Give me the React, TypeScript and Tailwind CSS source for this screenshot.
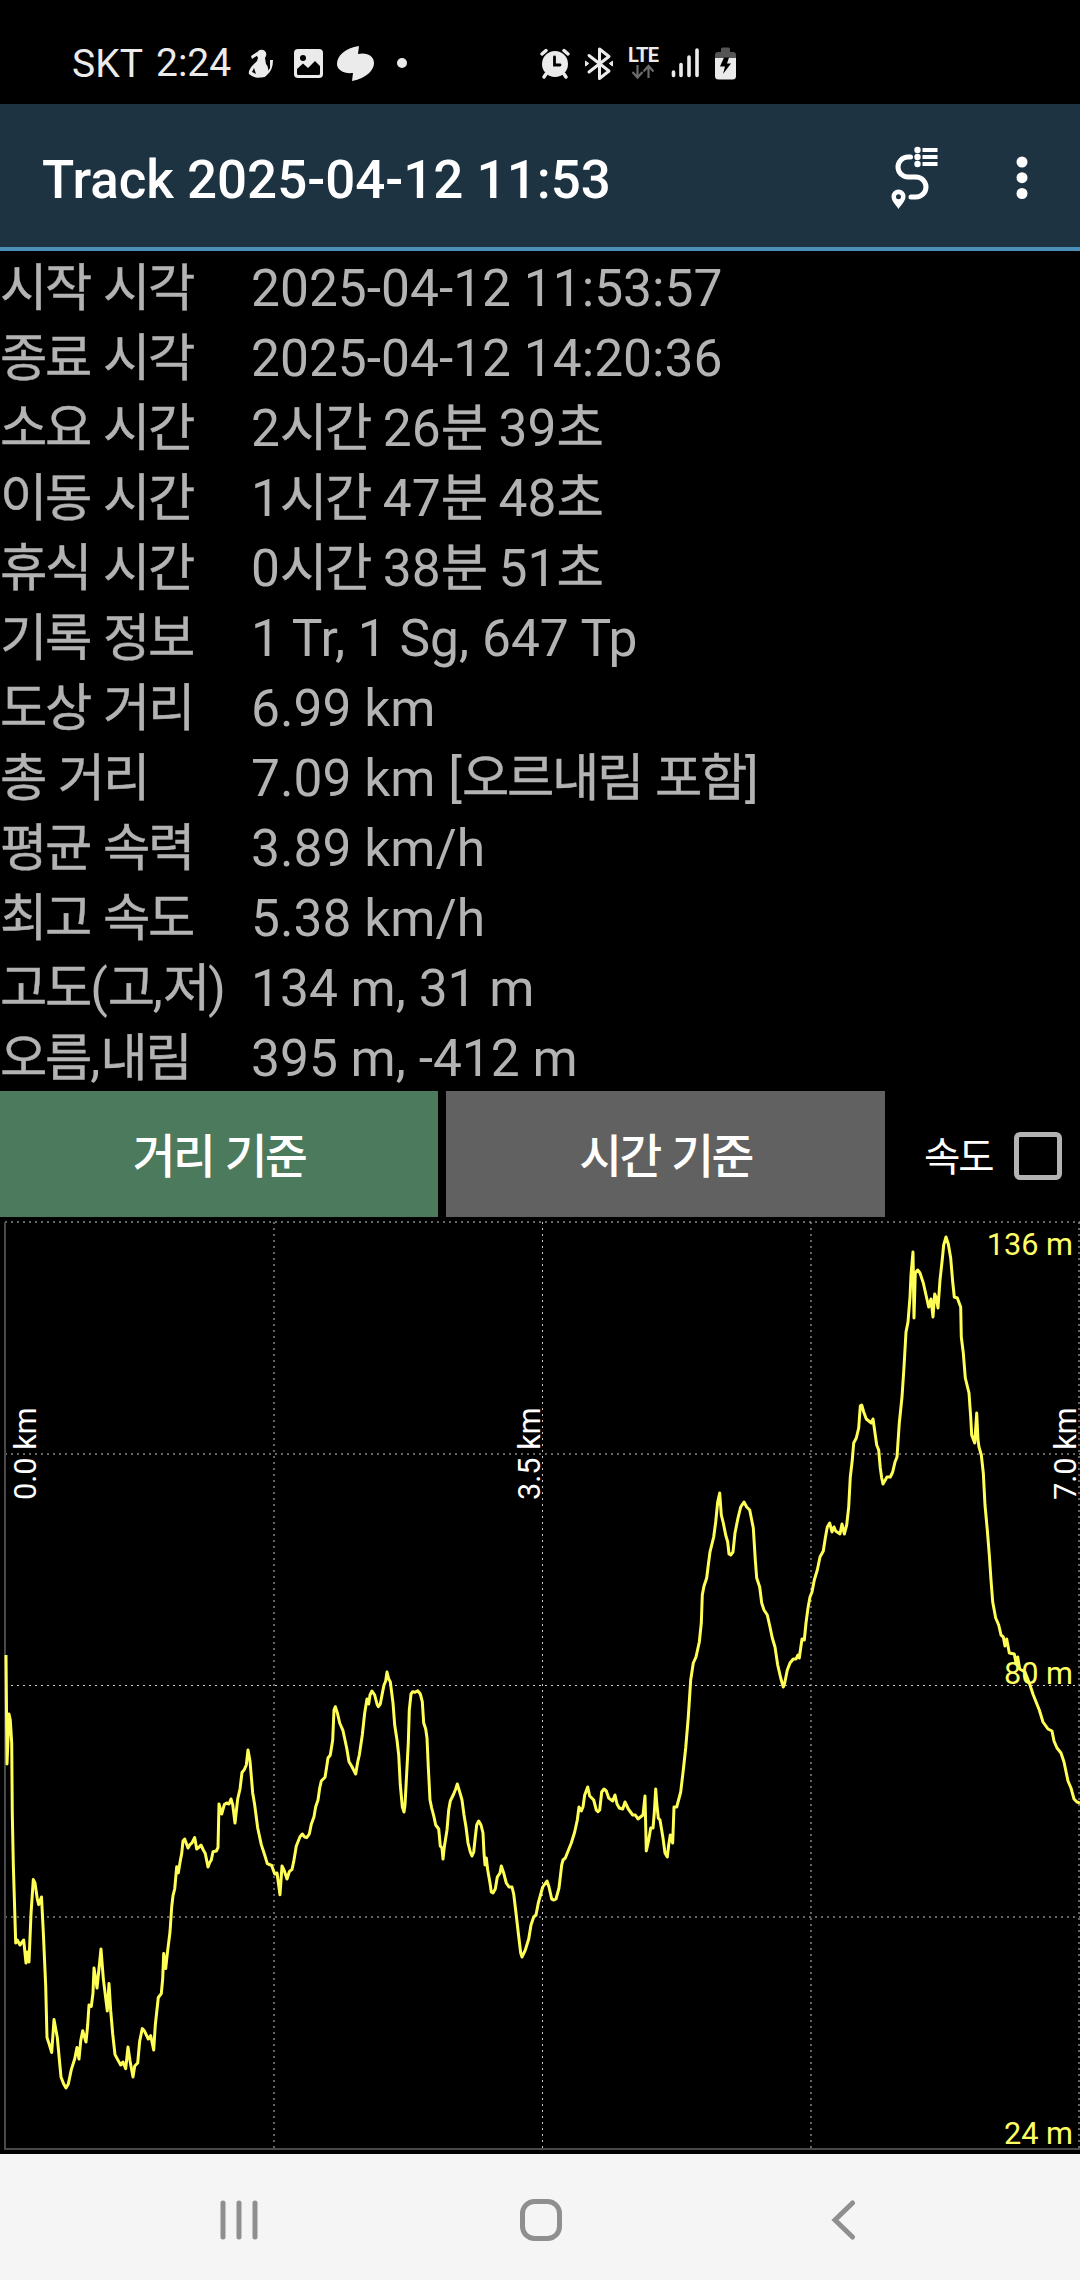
import React from 'react'

type Point = [number, number]

const STATS: { label: string; value: string }[] = [
  { label: '시작 시각', value: '2025-04-12 11:53:57' },
  { label: '종료 시각', value: '2025-04-12 14:20:36' },
  { label: '소요 시간', value: '2시간 26분 39초' },
  { label: '이동 시간', value: '1시간 47분 48초' },
  { label: '휴식 시간', value: '0시간 38분 51초' },
  { label: '기록 정보', value: '1 Tr, 1 Sg, 647 Tp' },
  { label: '도상 거리', value: '6.99 km' },
  { label: '총 거리', value: '7.09 km [오르내림 포함]' },
  { label: '평균 속력', value: '3.89 km/h' },
  { label: '최고 속도', value: '5.38 km/h' },
  { label: '고도(고,저)', value: '134 m, 31 m' },
  { label: '오름,내림', value: '395 m, -412 m' },
]

// Elevation profile, in chart units
const PROFILE: Point[] = [
  [6, 1655], [7, 1764], [9, 1714], [10.3, 1720], [11.7, 1743], [12.3, 1814], [13.3, 1864], [15.7, 1943],
  [17.3, 1940], [20, 1945], [23.7, 1940], [26, 1963], [27.3, 1952], [29, 1962], [31, 1914], [33.3, 1879.6],
  [35, 1883], [37.3, 1899], [38.7, 1904.6], [41.5, 1897], [43.3, 1932], [45.7, 1986], [47, 2037.5], [49.3, 2044.6],
  [51.7, 2052.5], [54, 2019.6], [57.3, 2037.5], [59.3, 2059], [61, 2077], [63.7, 2084], [66, 2088], [68.3, 2084],
  [71.3, 2069.6], [74.7, 2059], [77, 2047.5], [79, 2059], [80.7, 2041], [82.7, 2030.7], [86, 2042], [87.7, 2025],
  [89, 2005], [91.3, 2006.4], [93, 1993], [94, 1968], [97, 1988], [101, 1949], [103.3, 1978.6], [107.3, 2011],
  [109, 1983.6], [110.7, 2010.7], [112.7, 2034], [115, 2054.6], [117.7, 2059.6], [120.7, 2065], [123, 2062], [125.7, 2068.6],
  [128, 2047], [130, 2060.7], [133, 2077], [134.7, 2066], [137.7, 2063], [139.7, 2041], [142.3, 2028.6], [144.3, 2030.7],
  [148.3, 2039], [150.7, 2035.7], [153.7, 2050], [155.3, 2025], [158.3, 1997.5], [161.3, 1993.6], [162.7, 1978.6], [163.7, 1953.6],
  [165.7, 1968.6], [167.3, 1953.6], [170, 1932], [171.7, 1907], [173, 1895.7], [174.7, 1889], [176.7, 1866.8], [178.3, 1872.9],
  [180.3, 1860.7], [181.7, 1853.6], [183, 1841], [184.7, 1839], [188, 1848], [190, 1844.6], [192, 1842.9], [194.7, 1837.5],
  [196.7, 1849], [198.7, 1847.5], [201, 1845], [203.3, 1850], [205.3, 1853.6], [208, 1867], [209.7, 1862.5], [211.3, 1860],
  [213, 1851.8], [216.3, 1851], [218, 1847.5], [219, 1804], [221.7, 1814], [224.3, 1804.6], [226.7, 1803], [229, 1804],
  [231, 1799], [232.7, 1804.6], [235, 1823], [237.7, 1799], [240, 1789], [242, 1772.5], [244.3, 1769.6], [246.3, 1765],
  [248, 1750], [250, 1761], [252.7, 1793], [254.7, 1805], [257.7, 1828], [261.3, 1844.6], [265, 1856], [267.3, 1863.6],
  [271.7, 1865.5], [274.7, 1874], [277, 1873], [280, 1894.7], [282, 1866], [284.3, 1870.7], [287, 1879], [289.3, 1871.7],
  [292, 1869.3], [293.7, 1861.7], [296.3, 1846], [300, 1836.7], [302.3, 1834], [304.7, 1837], [306.7, 1837.7], [309.3, 1834],
  [311.3, 1824.3], [314, 1816.7], [315.7, 1806.7], [318, 1800], [319.7, 1788], [321.3, 1781], [325, 1777.3], [326.7, 1766.7],
  [328, 1758], [330.3, 1755], [332.7, 1740], [334, 1710], [335.3, 1706.7], [337.3, 1712.7], [339.7, 1723], [343, 1730.7],
  [346.7, 1748], [349, 1761.7], [352, 1766.7], [355.7, 1774], [357.7, 1762], [359.3, 1755], [362.3, 1735], [364.7, 1713],
  [367, 1699], [368.7, 1704], [370, 1695], [372, 1691], [374.7, 1695], [377, 1704], [378.3, 1706.7], [380.3, 1704],
  [382, 1695], [384, 1685], [385.7, 1681], [387, 1672], [388.7, 1679], [390.3, 1681.7], [393, 1703], [394.7, 1725],
  [397, 1740], [398.7, 1755], [400.3, 1785], [402.3, 1806.7], [404, 1812], [405, 1805], [406.7, 1773], [408.3, 1743],
  [409.3, 1710], [411, 1694], [412.7, 1691.7], [415, 1692.3], [417.7, 1690.7], [420.3, 1694], [422.3, 1701.7], [423.7, 1723],
  [425.7, 1729], [427, 1738], [428.3, 1767], [430, 1800], [431.7, 1808], [434, 1817], [435.7, 1825], [438.7, 1829],
  [440.3, 1846], [442, 1848], [443, 1859], [444.3, 1847], [447, 1830], [448.7, 1810], [450.3, 1801], [453.7, 1794],
  [455.7, 1789], [457.3, 1784], [460, 1793], [462, 1800], [464, 1815], [466, 1827], [468, 1843], [470.3, 1852],
  [472, 1856], [473.7, 1852], [475.3, 1837], [476.7, 1825], [478.7, 1821], [481, 1825], [483, 1833], [484, 1853],
  [485, 1865], [486.3, 1858], [487.7, 1870], [490, 1883], [491.3, 1892], [493, 1893], [495.3, 1889], [497.3, 1877],
  [500, 1873], [501.3, 1866], [503.7, 1873], [506.3, 1883], [509, 1887], [512, 1887], [513.7, 1894], [516, 1913],
  [518.3, 1933], [520.7, 1953], [522, 1957], [525.3, 1950], [528.7, 1939], [531, 1925], [533.7, 1917], [536, 1915],
  [538.3, 1903], [542.7, 1887], [547, 1881], [549, 1887], [551.7, 1899], [554, 1900], [556, 1899], [559, 1888],
  [561.7, 1865], [563, 1860], [565.3, 1858], [567.7, 1852], [571.3, 1843], [574.7, 1832], [577.3, 1820], [579, 1807],
  [581.3, 1811], [583, 1807], [584.7, 1795], [587.7, 1787], [589.7, 1796], [593.7, 1800], [596.3, 1810], [598, 1811.7],
  [599.7, 1810], [601.7, 1792], [604, 1789], [606.3, 1791], [608.7, 1798], [612.7, 1801], [615, 1795], [617, 1804],
  [619.3, 1808], [622.7, 1809], [625, 1802], [628.3, 1809], [632.7, 1815], [635.3, 1815], [638, 1819], [641.7, 1816],
  [643, 1815], [645, 1796], [646.3, 1851], [648.7, 1840], [650.7, 1828], [653, 1828], [654.3, 1813], [655.7, 1789],
  [656.7, 1803], [658.3, 1818], [660, 1820], [663, 1838], [665, 1853], [667.3, 1857], [668.7, 1845], [670.3, 1835],
  [672.7, 1843], [674, 1807], [676.7, 1807], [680.7, 1792], [683.3, 1770], [685.7, 1748], [688.3, 1717], [690.7, 1680],
  [693.3, 1663], [696, 1657], [699.3, 1642], [701.3, 1623], [702.3, 1595], [704, 1586], [706.7, 1578], [708.3, 1565],
  [710, 1552], [713.7, 1537], [715.7, 1522], [717.7, 1502], [719.7, 1493], [721.3, 1515], [723.3, 1523], [725.7, 1535],
  [727.7, 1542], [729, 1554], [730.7, 1555], [733, 1552], [735, 1533], [738, 1518], [740.7, 1507], [744, 1502],
  [746.7, 1507], [749.7, 1510], [753.3, 1528], [755.3, 1560], [756.7, 1578], [759.7, 1587], [761.7, 1603], [764, 1610],
  [767.3, 1615], [770, 1627], [772.3, 1638], [775, 1647], [777.7, 1665], [780.7, 1678], [783.3, 1687], [784.7, 1683],
  [787.3, 1670], [790, 1663], [793.3, 1659], [796, 1659], [798, 1655], [799.3, 1658], [800.7, 1648], [802, 1639],
  [804.3, 1640], [806, 1623], [808, 1608], [810, 1597], [812, 1592], [814.3, 1580], [817.3, 1570], [820, 1557],
  [823.3, 1551], [825.3, 1538], [827.3, 1527], [829.7, 1523], [832, 1532], [834, 1527], [835.7, 1531], [840, 1534],
  [842, 1524], [844.3, 1534], [846.7, 1525], [848.7, 1507], [850.3, 1477], [852.3, 1460], [853.7, 1443], [856.3, 1438],
  [858.7, 1428], [860.3, 1406], [861.7, 1405], [863.7, 1412], [866.3, 1419], [871.3, 1423], [873, 1419], [875, 1433],
  [876.7, 1445], [878.7, 1450], [880.3, 1468], [881.7, 1478], [883, 1484], [887, 1477], [890.3, 1477], [892.7, 1472],
  [895, 1462], [897, 1457], [899.3, 1423], [902, 1397], [904, 1367], [906, 1332], [908, 1322], [910, 1297],
  [911, 1275], [913, 1252], [914, 1318], [915.3, 1273], [917.7, 1270], [920, 1273], [923.3, 1283], [928.7, 1307],
  [931, 1299], [933, 1317], [934.7, 1294], [936.3, 1298], [938, 1308], [940, 1280], [942, 1262], [943.7, 1245],
  [946, 1237], [948.3, 1244], [950.7, 1258], [952.7, 1282], [954.3, 1297], [957.3, 1298], [960.7, 1307], [961.3, 1337],
  [963.3, 1353], [965.3, 1378], [969, 1393], [970.7, 1417], [971.7, 1435], [974.7, 1443], [976.7, 1413], [978, 1440],
  [979, 1447], [981.3, 1455], [983.3, 1473], [985, 1505], [987.3, 1530], [989.3, 1555], [991, 1580], [992.7, 1602],
  [995.7, 1618], [998.7, 1625], [1001, 1635], [1003.3, 1637], [1005, 1646], [1006.7, 1639], [1009.3, 1653], [1014.3, 1654],
  [1016, 1663], [1017.7, 1657], [1019.7, 1669], [1025, 1672], [1029.3, 1683], [1033.3, 1695], [1039.3, 1710], [1043, 1722],
  [1048, 1729], [1052, 1731], [1054, 1741], [1057, 1748], [1061, 1753], [1064, 1762], [1068, 1781], [1071, 1788],
  [1074, 1799], [1077, 1802], [1080, 1803],
]

const GRID_X = [274, 542.5, 811, 1079]
const GRID_Y = [1222, 1454, 1685.5, 1917]

// Hangul glyphs are set a little tighter than the Latin ones
const Mixed: React.FC<{ text: string; className?: string }> = ({ text, className }) => (
  <>
    {text.split(/([가-힣]+)/).map((part, i) =>
      /[가-힣]/.test(part) ? (
        <span key={i} className={className ?? 'tracking-[-0.055em]'}>{part}</span>
      ) : (
        part
      )
    )}
  </>
)

const StatusBar: React.FC = () => (
  <div className="flex h-[104px] items-start bg-black pt-[46px] pl-[72px] text-[#ebebeb]">
    <span className="w-[84px] text-[39px] leading-[37px]">SKT</span>
    <span className="w-[92px] text-[39px] leading-[34px]">2:24</span>
    <svg className="h-9 w-[26px]" viewBox="0 0 26 36" fill="#ebebeb">
      <circle cx="13.5" cy="8.5" r="4.8" />
      <path d="M3 10 L9 6 L10 9 L4 13Z M10 12 H17 L18 18 Q21 21 20 25 L22 22 L22 14 L25 14 Q25 24 19 29 Q17 32 12 31.500 Q7 33 1 28 Q0 25 4 20 L9 15Z" />
      <path d="M6 22 L4 26 L8 28Z" fill="#000" />
    </svg>
    <svg className="ml-[20px] h-9 w-[29px]" viewBox="0 0 29 36">
      <rect y="3" width="29" height="29" rx="4" fill="#ebebeb" />
      <circle cx="9" cy="12" r="3" fill="#000" />
      <path d="M3 23 L9 17.500 L14 22 L21 15 L26 20 V27.500 Q26 29 24.500 29 H4.500 Q3 29 3 27.500Z" fill="#000" />
    </svg>
    <svg className="ml-[14px] h-9 w-[37px]" viewBox="0 0 37 36" fill="#ebebeb">
      <path d="M22 0 C8 2 0 10 0 18 C0 24 7 28 16 27 L15 35 C30 32 37 24 37 17 C37 10 30 6 21 8Z" />
    </svg>
    <svg className="ml-[23px] h-9 w-[10px]" viewBox="0 0 10 36" fill="#ebebeb">
      <circle cx="5" cy="17" r="5" />
    </svg>
    <svg className="ml-[133px] h-9 w-[30px]" viewBox="0 0 30 36" fill="none" strokeLinecap="round">
      <circle cx="15" cy="18" r="13" fill="#ebebeb" />
      <path d="M2 8 L6 4.500 M28 8 L24 4.500 M6 28 L4 31 M24 28 L26 31" stroke="#ebebeb" strokeWidth="3.400" />
      <path d="M14.500 11 V19 H20" stroke="#000" strokeWidth="2.800" />
    </svg>
    <svg className="ml-[14px] h-9 w-[30px]" viewBox="0 0 30 36" fill="none" stroke="#ebebeb" strokeWidth="3" strokeLinejoin="round" strokeLinecap="round">
      <path d="M5 9.500 L25 25 L15.500 32.500 V3 L25 10.500 L5 26" />
      <path d="M1.500 15.500 V20 L4.500 17.700Z M28.500 15.500 V20 L25.500 17.700Z" fill="#ebebeb" strokeWidth="1" />
    </svg>
    <div className="ml-[14px] flex w-8 flex-col">
      <span className="text-[20px] leading-[18px] font-bold tracking-[-0.030em]">LTE</span>
      <svg className="ml-[3px] h-4 w-[24px]" viewBox="0 0 24 16" fill="none" stroke="#6b6b6b" strokeWidth="2.200">
        <path d="M6.500 1 V13 M1.500 8 L6.500 13.500 L11.500 8 M17.500 14 V3 M12.500 7.500 L17.500 2 L22.500 7.500" />
      </svg>
    </div>
    <svg className="ml-[11px] h-9 w-[29px]" viewBox="0 0 29 36" stroke="#ebebeb" strokeWidth="3.600" strokeLinecap="round">
      <path d="M2.500 26 V29.500 M10 18.500 V29.500 M18 11 V29.500 M26 4 V29.500" />
    </svg>
    <svg className="ml-[15px] h-9 w-[21px]" viewBox="0 0 21 36">
      <path d="M6 3 Q6 1.500 7.500 1.500 H13.500 Q15 1.500 15 3 V6 H18 Q21 6 21 9 V14 H0 V9 Q0 6 3 6 H6Z" fill="#555" />
      <path d="M0 12 H21 V30 Q21 33.500 17.500 33.500 H3.500 Q0 33.500 0 30Z" fill="#ebebeb" />
      <path d="M9 11.500 H14 L12 17.500 H16 L8 28 L10 20.500 H5Z" fill="#000" />
    </svg>
  </div>
)

const Header: React.FC = () => (
  <header className="flex h-[147px] items-center border-b-4 border-[#4a90b8] bg-[#1e3342] pt-1 pl-[42px]">
    <h1 className="w-[849px] pt-1 text-[52.900px] leading-[60px] font-medium text-white">
      Track 2025-04-12 11:53
    </h1>
    <button aria-label="track list">
      <svg className="h-[64px] w-[48px]" viewBox="0 0 48 64" fill="none">
        <path d="M19.500 11 H17 A10 10 0 0 0 17 31 H25 A10 10 0 0 1 25 51 H20" stroke="#fff" strokeWidth="5" strokeLinecap="round" />
        <path d="M7.500 43.500 A7 7 0 0 0 0.500 50.500 C0.500 55 4.500 58.500 7.500 63 C10.500 58.500 14.500 55 14.500 50.500 A7 7 0 0 0 7.500 43.500Z M7.500 48.200 A2.500 2.500 0 1 1 7.500 53.200 A2.500 2.500 0 1 1 7.500 48.200Z" fill="#fff" fillRule="evenodd" />
        <g fill="#fff">
          <circle cx="26.500" cy="4" r="3.200" />
          <circle cx="26.500" cy="11" r="3.200" />
          <circle cx="26.500" cy="18" r="3.200" />
          <rect x="31.500" y="2" width="15" height="4" />
          <rect x="31.500" y="9" width="15" height="4" />
          <rect x="31.500" y="16" width="15" height="4" />
        </g>
      </svg>
    </button>
    <button aria-label="menu" className="ml-[77px]">
      <svg className="h-[44px] w-3" viewBox="0 0 12 44" fill="#fff">
        <circle cx="6" cy="6" r="5.500" />
        <circle cx="6" cy="21.700" r="5.500" />
        <circle cx="6" cy="37.500" r="5.500" />
      </svg>
    </button>
  </header>
)

const StatsTable: React.FC = () => (
  <dl className="text-[51.500px] leading-[76px] text-[#b3b3b3]">
    {STATS.map(({ label, value }) => (
      <div key={label} className="flex h-[70px] whitespace-nowrap">
        <dt className="w-[251px]">
          <Mixed text={label} className="tracking-[-0.045em] [-webkit-text-stroke:0.4px]" />
        </dt>
        <dd>
          <Mixed text={value} className="tracking-[-0.045em] [-webkit-text-stroke:0.4px]" />
        </dd>
      </div>
    ))}
  </dl>
)

const Controls: React.FC = () => (
  <div className="flex h-[126px] items-center text-white">
    <button className="h-full w-[438px] bg-[#4c7a5d] pt-2 text-[46.500px] font-medium"><Mixed text="거리 기준" /></button>
    <button className="ml-2 h-full w-[439px] bg-[#616161] pt-2 text-[46.500px] font-medium"><Mixed text="시간 기준" /></button>
    <label className="ml-[39px] flex items-center gap-[22px] pt-1 text-[39.500px]">
      <span className="pt-1"><Mixed text="속도" /></span>
      <span className="h-[48px] w-[48px] rounded-[6px] border-[5px] border-[#b3b3b3]" />
    </label>
  </div>
)

const ElevationChart: React.FC = () => (
  <svg className="block h-[937px] w-full" viewBox="0 1217 1080 937" fontSize="30.700">
    <g stroke="#c8c8c8" strokeWidth="1" strokeDasharray="2 4">
      {GRID_X.map((x) => (
        <line key={x} x1={x} y1="1222" x2={x} y2="2149" />
      ))}
      {GRID_Y.map((y) => (
        <line key={y} x1="5" y1={y} x2="1080" y2={y} />
      ))}
    </g>
    <path d="M5 1222 V2149 H1080" fill="none" stroke="#484848" strokeWidth="2" />
    <polyline
      points={PROFILE.map((p) => p.join(',')).join(' ')}
      fill="none"
      stroke="#ffff55"
      strokeWidth="3"
      strokeLinejoin="round"
    />
    <g fill="#ffff66" textAnchor="end">
      <text x="1073" y="1254.500">136 m</text>
      <text x="1073" y="1683.500">80 m</text>
      <text x="1073" y="2143.500">24 m</text>
    </g>
    <g fill="#fff">
      <text transform="translate(36 1500) rotate(-90)">0.0 km</text>
      <text transform="translate(539.500 1500) rotate(-90)">3.5 km</text>
      <text transform="translate(1075.500 1500) rotate(-90)">7.0 km</text>
    </g>
  </svg>
)

const NavBar: React.FC = () => (
  <nav className="flex h-[126px] items-center bg-[#f5f5f5] pl-[220px] pb-[1px]">
    <svg className="mt-[6px] h-[42px] w-[38px]" viewBox="0 0 38 42" stroke="#8f8f8f" strokeWidth="5" strokeLinecap="round">
      <path d="M3 4 V38 M19 4 V38 M35 4 V38" />
    </svg>
    <svg className="mt-[6px] ml-[262px] h-[42px] w-[42px]" viewBox="0 0 42 42" fill="none" stroke="#8f8f8f" strokeWidth="5">
      <rect x="2.500" y="2.500" width="37" height="37" rx="12" />
    </svg>
    <svg className="mt-[6px] ml-[268px] h-[42px] w-[26px]" viewBox="0 0 26 42" fill="none" stroke="#8f8f8f" strokeWidth="5" strokeLinecap="round">
      <path d="M22.500 4 L5 21 L22.500 38" />
    </svg>
  </nav>
)

const App: React.FC = () => {
  return (
    <div className="h-[2280px] w-[1080px] overflow-hidden bg-black font-[Roboto,'Noto_Sans_CJK_KR',sans-serif]">
      <StatusBar />
      <Header />
      <StatsTable />
      <Controls />
      <ElevationChart />
      <NavBar />
    </div>
  )
}

export default App
